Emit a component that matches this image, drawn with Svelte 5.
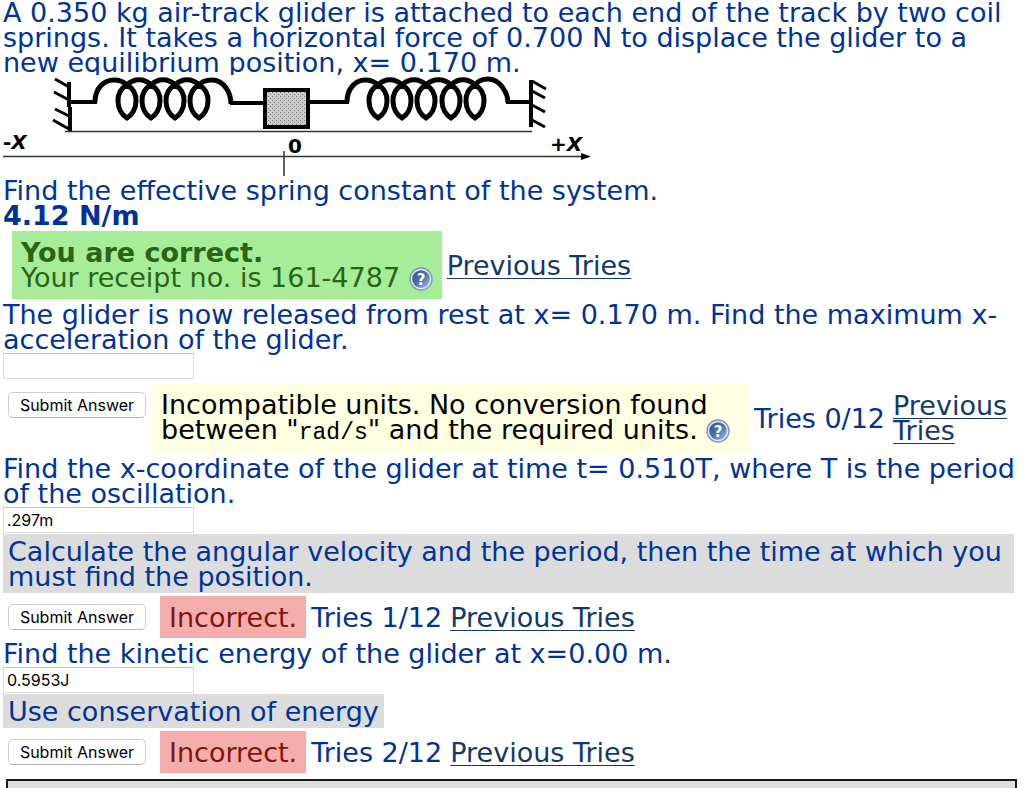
<script lang="ts">
  const leftLoops = [127, 151, 175, 199];
  const rightLoops = [378, 402, 426, 451, 475];

  let acceleration = $state("");
  let position = $state(".297m");
  let energy = $state("0.5953J");

  function coil(centers: number[]) {
    return centers
      .map((c, i) => {
        const loop = `M${c} 85C${c - 13} 92 ${c - 11} 111 ${c} 118C${c + 11} 111 ${c + 13} 92 ${c} 85`;
        const next = centers[i + 1];
        return next ? `${loop}C${c + 7} 78 ${next - 7} 78 ${next} 85` : loop;
      })
      .join("");
  }
</script>

{#snippet help()}
  <a class="help" href="#help" aria-label="Help">
    <svg viewBox="0 0 24 24" width="24" height="24">
      <defs>
        <linearGradient id="badge" x1="0" y1="0" x2="1" y2="1">
          <stop offset="0" stop-color="#2f5597" />
          <stop offset="0.5" stop-color="#4a6fae" />
          <stop offset="1" stop-color="#a9bfe4" />
        </linearGradient>
      </defs>
      <circle cx="12" cy="12" r="11" fill="#dfe7f5" stroke="#8598bd" stroke-width="1.4" />
      <circle cx="12" cy="12" r="8.8" fill="url(#badge)" />
      <text x="12" y="17.5" text-anchor="middle" fill="#fff" font-size="15" font-weight="700">?</text>
    </svg>
  </a>
{/snippet}

<main>
  <p>
    A 0.350 kg air-track glider is attached to each end of the track by two coil
    springs. It takes a horizontal force of 0.700 N to displace the glider to a
    new equilibrium position, x= 0.170 m.
  </p>
  <div class="figure">
    <svg viewBox="3 75 589 102" width="589" height="102" role="img" aria-label="Glider held between two springs">
      <rect x="3" y="75" width="589" height="102" fill="#fff" />
      <defs>
        <pattern id="mesh" width="4" height="4" patternUnits="userSpaceOnUse">
          <rect width="4" height="4" fill="#ccc" />
          <path d="M0 0h1v1H0zM2 2h1v1H2z" fill="#777" />
        </pattern>
      </defs>
      <g fill="none" stroke="#000" stroke-width="4">
        <path d="M69 82V107M70 107V131" />
        <path d="M55 79L69 87M54 92L69 100M55 109L69 116M53 120L69 129" stroke-width="3" />
        <path d="M70 102H97M230 103H264M309 102H349M506 102H531" />
        <g stroke-width="5">
          <path d="M95 102C95 88 104 80 114 80C120 80 124 82 127 85" />
          <path d={coil(leftLoops)} />
          <path d="M199 85C202 81 206 80 212 80C224 80 231 93 231 104" />
          <path d="M347 102C347 88 356 80 365 80C371 80 375 82 378 85" />
          <path d={coil(rightLoops)} />
          <path d="M475 85C478 81 483 79 488 79C500 79 508 93 508 103" />
        </g>
        <path d="M531 80V127" />
        <path d="M532 81L546 89M532 91L545 98M532 105L545 112M532 120L545 127" stroke-width="3" />
        <rect x="265" y="90" width="43" height="37" fill="url(#mesh)" />
      </g>
      <path d="M65 131.5H532M3 156.5H584M284 151V176" stroke="#333" stroke-width="1.5" />
      <path d="M581 153L591 156.5L581 160z" />
      <g class="axis">
        <text x="3" y="149">-<tspan font-style="italic">X</tspan></text>
        <text x="288" y="153">0</text>
        <text x="550" y="151">+<tspan font-style="italic">X</tspan></text>
      </g>
    </svg>
  </div>

  <p>Find the effective spring constant of the system.</p>
  <p><b>4.12 N/m</b></p>
  <div class="row graded">
    <div class="status correct">
      <b>You are correct.</b><br />
      Your receipt no. is 161-4787 {@render help()}
    </div>
    <a href="#tries">Previous Tries</a>
  </div>

  <p><label for="acceleration">The glider is now released from rest at x= 0.170 m. Find the maximum x-acceleration of the glider.</label></p>
  <input id="acceleration" type="text" bind:value={acceleration} />
  <div class="row">
    <button class="high" type="button">Submit Answer</button>
    <div class="status units">
      Incompatible units. No conversion found between "<code>rad/s</code>" and the required units. {@render help()}
    </div>
    <span class="count">Tries 0/12</span>
    <a href="#tries">Previous Tries</a>
  </div>

  <p><label for="position">Find the x-coordinate of the glider at time t= 0.510T, where T is the period of the oscillation.</label></p>
  <input id="position" type="text" bind:value={position} />
  <div class="hint">
    Calculate the angular velocity and the period, then the time at which you
    must find the position.
  </div>
  <div class="row">
    <button type="button">Submit Answer</button>
    <div class="status incorrect">Incorrect.</div>
    <span class="count">Tries 1/12</span>
    <a href="#tries">Previous Tries</a>
  </div>

  <p><label for="energy">Find the kinetic energy of the glider at x=0.00 m.</label></p>
  <input id="energy" type="text" bind:value={energy} />
  <div class="hint short">Use conservation of energy</div>
  <div class="row">
    <button type="button">Submit Answer</button>
    <div class="status incorrect">Incorrect.</div>
    <span class="count">Tries 2/12</span>
    <a href="#tries">Previous Tries</a>
  </div>
  <div class="panel"></div>
</main>

<style>
  :global(body) {
    margin: 0;
    background: #fff;
  }
  main {
    padding-left: 3px;
    color: #003399;
    font: 27px/25px Verdana, "DejaVu Sans", sans-serif;
  }
  p {
    margin: 0;
  }
  a {
    color: #13386b;
    text-decoration-thickness: 1px;
    text-underline-offset: 3px;
  }

  .figure {
    padding-bottom: 1px;
  }
  .figure svg {
    display: block;
    max-width: 100%;
  }
  .axis {
    font-size: 20px;
    font-weight: 700;
  }

  .row {
    display: flex;
    align-items: center;
    gap: 5px;
    padding: 3px 10px 3px 5px;
  }
  .graded {
    padding-left: 9px;
  }
  .status {
    padding: 9px;
  }
  .correct {
    color: #2a6417;
    background: #a6ec99;
  }
  .units {
    flex: none;
    box-sizing: border-box;
    width: 597px;
    max-width: 60%;
    margin-left: 1px;
    padding-bottom: 11px;
    color: #000;
    background: #ffffe1;
  }
  .incorrect {
    margin-left: 9px;
    padding-bottom: 8px;
    color: #7d150f;
    background: #f5adab;
  }
  .count {
    margin-right: 3px;
    white-space: nowrap;
  }
  code {
    font: 23px/16px "Liberation Mono", monospace;
  }
  .help svg {
    margin-bottom: -1px;
    vertical-align: bottom;
  }

  input {
    display: block;
    box-sizing: border-box;
    width: 191px;
    height: 26px;
    margin: 1px 0;
    padding: 0 3px;
    border: 1px solid #dcdcdc;
    border-top-color: #c4c4c4;
    background: #fff;
    color: #000;
    font: 16px/24px Inter, sans-serif;
  }
  button {
    flex: none;
    box-sizing: border-box;
    width: 138px;
    height: 26px;
    padding: 0;
    border: 1px solid #cfcfcf;
    border-bottom-color: #b5b5b5;
    border-radius: 5px;
    background: #fff;
    color: #000;
    font: 16px/24px Inter, sans-serif;
  }
  .high {
    align-self: flex-start;
    margin-top: 9px;
  }

  .hint {
    margin-right: 10px;
    padding: 5px 5px 4px;
    background: #dcdcdc;
  }
  .short {
    width: fit-content;
  }
  .panel {
    height: 7px;
    margin: 3px 7px 0 3px;
    border: 2px solid #1a1a1a;
    border-bottom: 0;
    background: #e0dfe0;
  }
</style>
